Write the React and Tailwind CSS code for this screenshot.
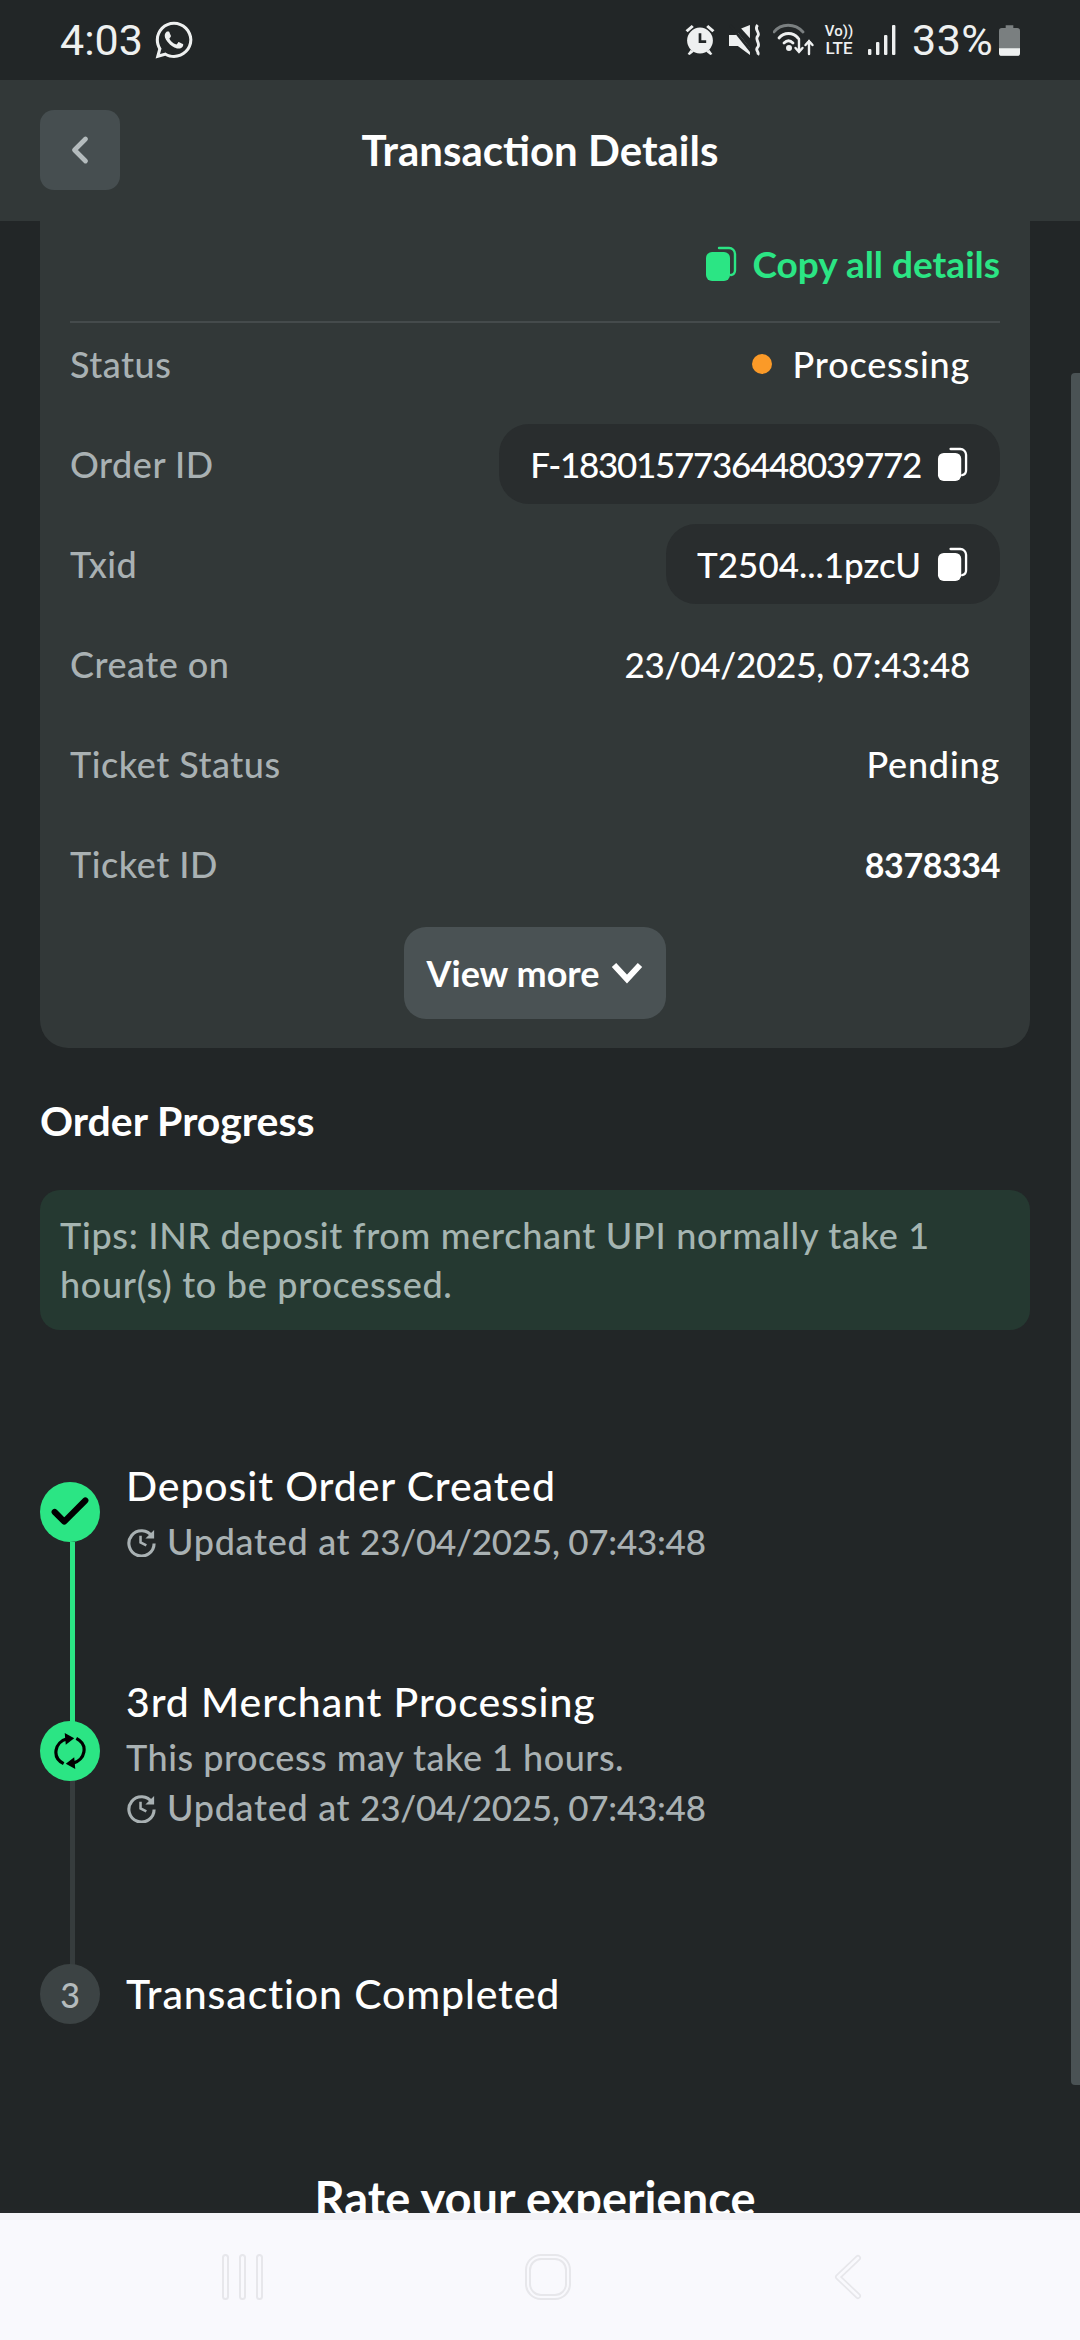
import React from "react";
import { ChevronLeft, Check } from "lucide-react";
import { FaWhatsapp } from "react-icons/fa";

const font = "font-['Lato','Noto_Sans',sans-serif]";

const CopyIcon = ({ className }) => (
  <svg viewBox="0 0 32 36" className={className} fill="none">
    <path d="M14 2h10a6 6 0 0 1 6 6v16a5 5 0 0 1-4 5" stroke="currentColor" strokeWidth="2.4" strokeLinecap="round" />
    <rect x="1" y="6" width="24" height="29" rx="6" fill="currentColor" />
  </svg>
);

const HistoryIcon = () => (
  <svg viewBox="0 0 32 32" className="w-[31px] h-[31px] shrink-0 text-[#a9b1b3]" fill="none" stroke="currentColor" strokeWidth="3.2">
    <path d="M27 11a13 13 0 1 0 2 7" />
    <path d="M29 4v9h-9z" fill="currentColor" stroke="none" />
    <path d="M15 10v7l6 3" strokeWidth="2.6" />
  </svg>
);

const Row = ({ label, children }) => (
  <div className="flex items-center justify-between h-[80px] mb-[20px]">
    <span className="text-[36px] tracking-[0.5px] font-medium text-[#a9b1b3]">{label}</span>
    {children}
  </div>
);

const Chip = ({ text, className }) => (
  <div className="flex items-center gap-[16px] h-[80px] pl-[31px] pr-[32px] rounded-[30px] bg-[#292d2e] font-medium text-white">
    <span className={`text-[35px] ${className}`}>{text}</span>
    <CopyIcon className="w-[31px] h-[35px] text-white" />
  </div>
);

const StatusBar = () => (
  <div className="h-[80px] shrink-0 bg-[#222627] flex items-center justify-between pl-[60px] pr-[60px] text-[#eef0f0] font-['Roboto',sans-serif]">
    <div className="flex items-center gap-[10px]">
      <span className="text-[43px]">4:03</span>
      <FaWhatsapp className="w-[42px] h-[42px]" />
    </div>
    <div className="flex items-center">
      <svg viewBox="1 1 30 31" className="w-[32px] h-[32px] mr-[13px]" fill="currentColor">
        <circle cx="16" cy="17" r="12.500" />
        <path d="M2 7l6-5 2 2-6 5zM30 7l-6-5-2 2 6 5zM7 26l-3 4 2 1 4-3zM25 26l3 4-2 1-4-3z" />
        <path d="M16 10v8h6" stroke="#222627" strokeWidth="2.6" fill="none" />
      </svg>
      <svg viewBox="1 1 29 29" className="w-[32px] h-[32px] mr-[12px]" fill="currentColor">
        <path d="M1 11h6l2-2 11 14v6L9 21H1z" />
        <path d="M12 5l8-3v12z" />
        <path d="M2 2l20 25" stroke="#222627" strokeWidth="2.4" />
        <path d="M27 2c-4 4 3 7 0 10s3 7 0 10 2 4 0 7" stroke="currentColor" strokeWidth="2.6" fill="none" />
      </svg>
      <svg viewBox="0 0 42 34" className="w-[42px] h-[34px] mr-[8px]" fill="none" stroke="currentColor" strokeLinecap="round" strokeWidth="2.8">
        <path d="M1 9C8 0 22 0 30 9" stroke="#7a7f80" />
        <path d="M6 15c5-6 14-6 19 0" />
        <path d="M11 20c3-3 6-3 9 0" />
        <circle cx="16" cy="25" r="1.600" fill="currentColor" />
        <path d="M26 16v13m-3.500-4 3.500 4 3.500-4M36 31V18m-3.500 4 3.500-4 3.500 4" strokeWidth="2.4" />
      </svg>
      <div className="flex flex-col items-center leading-none text-[15px] font-medium w-[32px] mr-[13px]">
        <span className="h-[15px]">Vo))</span>
        <span className="text-[17px] mt-[1px]">LTE</span>
      </div>
      <svg viewBox="0 0 28 30" className="w-[28px] h-[30px] mr-[16px]" fill="currentColor">
        <rect x="0" y="24" width="3.400" height="6" rx="1" />
        <rect x="8" y="17" width="3.400" height="13" rx="1" />
        <rect x="16" y="10" width="3.400" height="20" rx="1" />
        <rect x="24" y="0" width="3.400" height="30" rx="1" />
      </svg>
      <span className="text-[43px] tracking-[0.5px] leading-none w-[80px] mr-[7px]">33%</span>
      <svg viewBox="0 0 22 32" className="w-[21px] h-[31px]">
        <path d="M7 0h8v3h4a3 3 0 0 1 3 3v23a3 3 0 0 1-3 3H3a3 3 0 0 1-3-3V6a3 3 0 0 1 3-3h4z" fill="#7a7f80" />
        <path d="M0 24h22v5a3 3 0 0 1-3 3H3a3 3 0 0 1-3-3z" fill="#eef0f0" />
      </svg>
    </div>
  </div>
);

const Header = () => (
  <div className="relative z-10 h-[141px] shrink-0 bg-[#323838] flex items-center pl-[40px] pb-[1px]">
    <div className="w-[80px] h-[80px] rounded-[14px] bg-[#464e50] flex items-center justify-center">
      <ChevronLeft className="w-[44px] h-[44px] text-[#b4bbbd]" strokeWidth={2.6} />
    </div>
    <h1 className="flex-1 text-center pr-[120px] text-[42px] font-bold text-white">Transaction Details</h1>
  </div>
);

const Card = () => (
  <div className="-mt-[40px] bg-[#323838] rounded-[28px] px-[30px] pt-[52px] pb-[29px]">
    <div className="flex items-center justify-end gap-[15px] h-[62px] text-[#2be584] text-[37px] font-bold">
      <CopyIcon className="w-[32px] h-[36px] text-[#2be584]" />
      Copy all details
    </div>
    <div className="h-[2px] bg-[#454b4c] mt-[26px] mb-[1px]" />
    <Row label="Status">
      <div className="flex items-center gap-[21px] pr-[30px] text-[36px] tracking-[0.8px] font-medium text-white">
        <span className="w-[20px] h-[20px] rounded-full bg-[#fb9a28]" />
        Processing
      </div>
    </Row>
    <Row label="Order ID"><Chip text="F-1830157736448039772" className="tracking-[-1.3px]" /></Row>
    <Row label="Txid"><Chip text="T2504...1pzcU" /></Row>
    <Row label="Create on">
      <span className="pr-[30px] text-[35px] tracking-[-0.25px] font-medium text-white">23/04/2025, 07:43:48</span>
    </Row>
    <Row label="Ticket Status">
      <span className="text-[36px] tracking-[0.8px] font-medium text-white">Pending</span>
    </Row>
    <Row label="Ticket ID">
      <span className="text-[34px] tracking-[-0.4px] font-bold text-white">8378334</span>
    </Row>
    <div className="flex justify-center mt-[23px]">
      <div className="flex items-center gap-[12px] w-[262px] h-[92px] justify-center rounded-[22px] bg-[#4a5254] text-[36px] font-bold text-white">
        View more
        <svg viewBox="0 0 32 24" className="w-[32px] h-[24px]" fill="none" stroke="currentColor" strokeWidth="6">
          <path d="M3 4l13 14L29 4" />
        </svg>
      </div>
    </div>
  </div>
);

const Updated = () => (
  <div className="flex items-center gap-[10px] h-[50px] text-[#a9b1b3] font-medium">
    <HistoryIcon />
    <span className="text-[36px] tracking-[0.7px]">
      Updated at <span className="text-[35px] tracking-[-0.25px]">23/04/2025, 07:43:48</span>
    </span>
  </div>
);

const StepTitle = ({ children }) => (
  <div className="text-[41px] tracking-[0.9px] font-medium text-white h-[52px] leading-[52px]">{children}</div>
);

const Progress = () => (
  <div className="relative mt-[130px] h-[710px]">
    {/* connector lines */}
    <div className="absolute left-[30px] top-[82px] w-[5px] h-[180px] bg-[#2be584]" />
    <div className="absolute left-[30px] top-[320px] w-[5px] h-[185px] bg-[#363c3d]" />

    <div className="relative flex gap-[26px] items-start h-[216px]">
      <div className="w-[60px] h-[60px] rounded-full bg-[#2be584] flex items-center justify-center mt-[22px]">
        <Check className="w-[46px] h-[46px] text-black" strokeWidth={3.2} />
      </div>
      <div>
        <StepTitle>Deposit Order Created</StepTitle>
        <div className="mt-[4px]"><Updated /></div>
      </div>
    </div>

    <div className="relative flex gap-[26px] items-start h-[288px]">
      <div className="w-[60px] h-[60px] rounded-full bg-[#2be584] flex items-center justify-center mt-[45px]">
        <svg viewBox="0 0 32 36" className="w-[34px] h-[38px] text-black" fill="none" stroke="currentColor" strokeWidth="3">
          <path d="M13 6.500C2 9 -2 24 10 30" />
          <path d="M19 29.500C30 27 34 12 22 6" />
          <path d="M11 1l9 5-8 6zM21 35l-9-5 8-6z" fill="currentColor" stroke="none" />
        </svg>
      </div>
      <div>
        <StepTitle>3rd Merchant Processing</StepTitle>
        <div className="text-[36px] tracking-[0.5px] font-medium text-[#a9b1b3] h-[50px] leading-[50px] mt-[4px]">This process may take 1 hours.</div>
        <Updated />
      </div>
    </div>

    <div className="relative flex gap-[26px] items-center">
      <div className="w-[60px] h-[60px] rounded-full bg-[#3c4344] flex items-center justify-center text-[34px] text-[#b4bbbd] font-medium">3</div>
      <StepTitle>Transaction Completed</StepTitle>
    </div>
  </div>
);

const NavBar = () => (
  <div className="relative z-10 h-[127px] shrink-0 bg-[#f9f9fd] border-t-[7px] border-[#f2f2f6] flex items-center justify-center">
    <div className="flex items-center justify-between w-[640px] ml-[4px] -mt-[6px] text-[#e7e7eb]">
      <svg viewBox="0 0 42 46" className="w-[42px] h-[46px]" fill="none" stroke="currentColor" strokeWidth="2">
        <rect x="1" y="1" width="5" height="44" rx="2.500" />
        <rect x="18" y="1" width="5" height="44" rx="2.500" />
        <rect x="35" y="1" width="5" height="44" rx="2.500" />
      </svg>
      <svg viewBox="0 0 46 46" className="w-[46px] h-[46px]" fill="none" stroke="currentColor" strokeWidth="2">
        <rect x="1" y="1" width="44" height="44" rx="15" />
        <rect x="5" y="5" width="36" height="36" rx="11" />
      </svg>
      <svg viewBox="0 0 30 46" className="w-[30px] h-[46px]" fill="none" strokeLinecap="round" strokeLinejoin="round">
        <path d="M26 4L6 23l20 19" stroke="#e7e7eb" strokeWidth="6" />
        <path d="M26 4L6 23l20 19" stroke="#f9f9fd" strokeWidth="2.600" />
      </svg>
    </div>
  </div>
);

export default function App() {
  return (
    <div className={`relative w-[1080px] h-[2340px] flex flex-col overflow-hidden bg-[#222627] ${font}`}>
      <StatusBar />
      <Header />
      <div className="relative flex-1 min-h-0 overflow-hidden pl-[40px] pr-[50px]">
        <Card />
        <h2 className="mt-[51px] text-[41px] font-bold text-white leading-[44px]">Order Progress</h2>
        <div className="mt-[47px] rounded-[20px] bg-[#253931] px-[20px] py-[21px] text-[36px] tracking-[0.7px] font-medium leading-[49px] text-[#a5b5b1]">
          Tips: INR deposit from merchant UPI normally take 1 hour(s) to be processed.
        </div>
        <Progress />
        <h2 className="text-center text-[47px] leading-[56px] font-bold text-white">Rate your experience</h2>
      </div>
      {/* scrollbar */}
      <div className="absolute right-0 top-[373px] w-[9px] h-[1712px] rounded-l bg-[#4a5254]" />
      <NavBar />
    </div>
  );
}
